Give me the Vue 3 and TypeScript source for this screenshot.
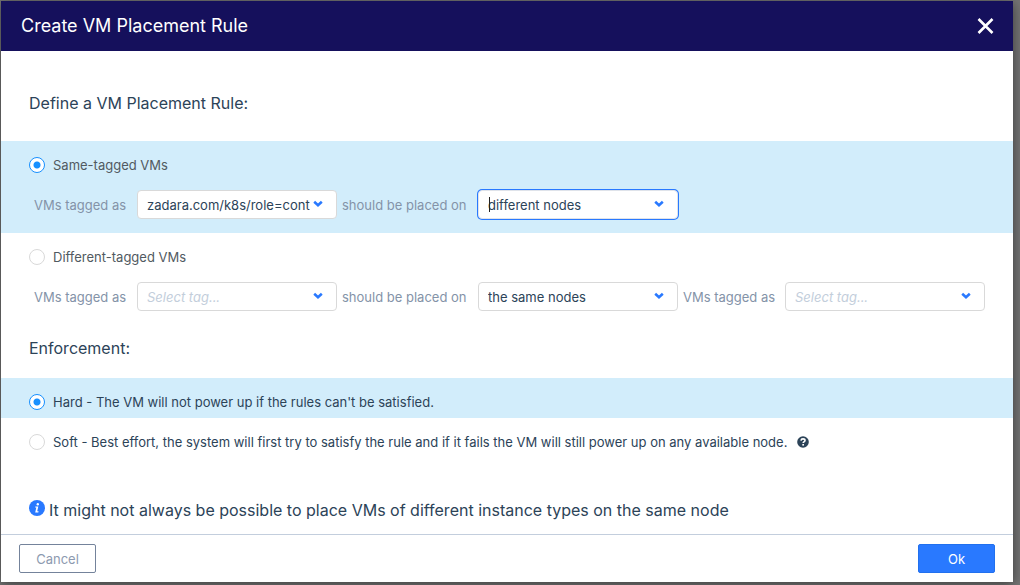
<script setup lang="ts">
import { ref } from 'vue'

const scope = ref<'same' | 'different'>('same')
const enforcement = ref<'hard' | 'soft'>('hard')

const sameTag = ref('zadara.com/k8s/role=control-plane')
const samePlacement = ref('different nodes')
const firstTag = ref('')
const secondTag = ref('')
const differentPlacement = ref('the same nodes')

const tags = ['zadara.com/k8s/role=control-plane']
const placements = ['different nodes', 'the same nodes']
</script>

<template>
  <div class="backdrop">
    <form class="dialog" role="dialog" aria-labelledby="dialog-title" @submit.prevent>
      <header class="dialog-header">
        <h1 id="dialog-title">Create VM Placement Rule</h1>
        <button type="button" class="close" aria-label="Close">
          <svg viewBox="0 0 18 18" width="18" height="18" aria-hidden="true">
            <path d="M1.5 2L15.5 16M15.5 2L1.5 16" fill="none" stroke="#fff" stroke-width="2.6" />
          </svg>
        </button>
      </header>

      <main class="dialog-body">
        <h2 class="define">Define a VM Placement Rule:</h2>

        <section class="rule" :class="{ active: scope === 'same' }">
          <label class="choice">
            <input v-model="scope" type="radio" name="scope" value="same" />
            <span>Same-tagged VMs</span>
          </label>
          <div class="fields">
            <label for="same-tag">VMs tagged as</label>
            <div class="picker">
              <select id="same-tag" v-model="sameTag">
                <option v-for="tag in tags" :key="tag" :value="tag">{{ tag }}</option>
              </select>
              <svg class="chevron" viewBox="0 0 10 8" aria-hidden="true"><path d="M1.2 1.8L5 5.2L8.8 1.8" /></svg>
            </div>
            <label for="same-placement">should be placed on</label>
            <div class="picker current">
              <select id="same-placement" v-model="samePlacement">
                <option v-for="item in placements" :key="item" :value="item">{{ item }}</option>
              </select>
              <span class="caret" aria-hidden="true"></span>
              <svg class="chevron" viewBox="0 0 10 8" aria-hidden="true"><path d="M1.2 1.8L5 5.2L8.8 1.8" /></svg>
            </div>
          </div>
        </section>

        <section class="rule" :class="{ active: scope === 'different' }">
          <label class="choice">
            <input v-model="scope" type="radio" name="scope" value="different" />
            <span>Different-tagged VMs</span>
          </label>
          <div class="fields">
            <label for="first-tag">VMs tagged as</label>
            <div class="picker">
              <select id="first-tag" v-model="firstTag" :class="{ empty: !firstTag }">
                <option value="">Select tag...</option>
                <option v-for="tag in tags" :key="tag" :value="tag">{{ tag }}</option>
              </select>
              <svg class="chevron" viewBox="0 0 10 8" aria-hidden="true"><path d="M1.2 1.8L5 5.2L8.8 1.8" /></svg>
            </div>
            <label for="different-placement">should be placed on</label>
            <div class="picker">
              <select id="different-placement" v-model="differentPlacement">
                <option v-for="item in placements" :key="item" :value="item">{{ item }}</option>
              </select>
              <svg class="chevron" viewBox="0 0 10 8" aria-hidden="true"><path d="M1.2 1.8L5 5.2L8.8 1.8" /></svg>
            </div>
            <label for="second-tag">VMs tagged as</label>
            <div class="picker">
              <select id="second-tag" v-model="secondTag" :class="{ empty: !secondTag }">
                <option value="">Select tag...</option>
                <option v-for="tag in tags" :key="tag" :value="tag">{{ tag }}</option>
              </select>
              <svg class="chevron" viewBox="0 0 10 8" aria-hidden="true"><path d="M1.2 1.8L5 5.2L8.8 1.8" /></svg>
            </div>
          </div>
        </section>

        <h2 class="enforcement">Enforcement:</h2>

        <div class="level" :class="{ active: enforcement === 'hard' }">
          <label class="choice">
            <input v-model="enforcement" type="radio" name="enforcement" value="hard" />
            <span>Hard - The VM will not power up if the rules can't be satisfied.</span>
          </label>
        </div>
        <div class="level" :class="{ active: enforcement === 'soft' }">
          <label class="choice">
            <input v-model="enforcement" type="radio" name="enforcement" value="soft" />
            <span>Soft - Best effort, the system will first try to satisfy the rule and if it fails the VM will still power up on any available node.</span>
          </label>
          <svg class="help" viewBox="0 0 12 12" aria-hidden="true">
            <circle cx="6" cy="6" r="5.8" fill="#2c4358" />
            <path d="M4 4.6C4.1 3.4 4.9 2.9 6 2.9C7.2 2.9 8 3.6 8 4.5C8 5.6 6.2 5.7 6.2 7.1" fill="none" stroke="#fff" stroke-width="1.6" />
            <rect x="5.3" y="8" width="1.7" height="1.6" fill="#fff" />
          </svg>
        </div>

        <p class="notice">
          <svg viewBox="0 0 16 16" width="16" height="16" aria-hidden="true">
            <circle cx="8" cy="8" r="8" fill="#2979ff" />
            <circle cx="8.8" cy="4.2" r="1.2" fill="#fff" />
            <path d="M6.3 6.5H9.3L8.2 11.3H9.6L9.3 12.4H6.2L7.3 7.6H6.1Z" fill="#fff" />
          </svg>
          <span>It might not always be possible to place VMs of different instance types on the same node</span>
        </p>
      </main>

      <footer class="dialog-footer">
        <button type="button" class="button cancel">Cancel</button>
        <button type="submit" class="button ok">Ok</button>
      </footer>
    </form>
  </div>
</template>

<style>
body {
  background: #757575;
}
</style>

<style scoped>
.backdrop,
.backdrop * {
  box-sizing: border-box;
}

.backdrop {
  display: flex;
  min-height: 100vh;
  padding: 1px 7px 3px 1px;
  background: #757575;
  font: 13px/16px Inter, "Liberation Sans", sans-serif;
  color: #2c4358;
}

.dialog {
  display: flex;
  flex: 1;
  flex-direction: column;
  min-width: 0;
  background: #fff;
  box-shadow: 0 2px 12px rgba(0, 0, 0, 0.5);
}

.dialog-header {
  display: flex;
  align-items: center;
  justify-content: space-between;
  height: 50px;
  padding: 0 18px 0 20px;
  background: #15105c;
}

h1,
h2,
p {
  margin: 0;
  font-weight: 400;
}

h1 {
  color: #fff;
  font-size: 18px;
  line-height: 24px;
}

h2 {
  padding: 0 28px;
  font-size: 16px;
  line-height: 20px;
}

.close {
  display: flex;
  padding: 0;
  border: 0;
  background: none;
}

.dialog-body {
  flex: 1;
}

.define {
  padding-top: 42px;
  padding-bottom: 28px;
}

.rule {
  min-height: 92px;
  padding-top: 16px;
}

.active {
  background: #d2edfb;
}

.choice {
  display: flex;
  align-items: center;
  gap: 8px;
}

.rule .choice {
  padding: 0 28px;
  color: #515a61;
}

.choice input {
  flex: none;
  width: 16px;
  height: 16px;
  margin: 0;
  appearance: none;
  border: 1px solid #d9d9d9;
  border-radius: 50%;
  background: #fff;
}

.choice input:checked {
  border-color: #1890ff;
  background: radial-gradient(circle, #1890ff 3px, #fff 4px);
}

.fields {
  display: grid;
  grid-template-columns: 98px 200px 131px 200px 97px 200px;
  align-items: center;
  gap: 5px;
  padding: 17px 0 0 33px;
  color: #8493a8;
}

.picker {
  position: relative;
}

select {
  display: block;
  width: 100%;
  height: 29px;
  padding: 0 26px 0 9px;
  appearance: none;
  border: 1px solid #d9d9d9;
  border-radius: 4px;
  outline: none;
  background: #fff;
  color: #2c4358;
  font: inherit;
}

select.empty {
  color: #c3cedb;
  font-style: italic;
}

.current select {
  border-color: #dfe3ea;
  box-shadow: 0 0 0 1px #2979ff;
}

.caret {
  position: absolute;
  top: 7px;
  left: 11px;
  width: 1px;
  height: 15px;
  background: #222;
}

.chevron {
  position: absolute;
  top: 10px;
  right: 14px;
  width: 10px;
  height: 8px;
  fill: none;
  stroke: #2979ff;
  stroke-width: 2.6;
  pointer-events: none;
}

.enforcement {
  padding-top: 13px;
  padding-bottom: 20px;
}

.level {
  display: flex;
  align-items: center;
  gap: 10px;
  min-height: 40px;
  padding: 8px 28px 0;
}

.level .choice {
  min-height: 32px;
}

.help {
  flex: none;
  width: 12px;
  height: 12px;
}

.notice {
  display: flex;
  align-items: flex-start;
  gap: 4px;
  padding: 42px 28px 14px;
  font-size: 16px;
  line-height: 20px;
}

.notice svg {
  flex: none;
}

.dialog-footer {
  display: flex;
  align-items: center;
  justify-content: space-between;
  height: 48px;
  padding: 0 18px;
  border-top: 1px solid #c3cedd;
}

.button {
  width: 77px;
  height: 29px;
  padding: 0;
  border: 1px solid #74839b;
  border-radius: 2px;
  background: #fff;
  color: #8d9ab0;
  font: inherit;
}

.ok {
  border-color: #2170ee;
  background: #2979ff;
  color: #fff;
}
</style>
